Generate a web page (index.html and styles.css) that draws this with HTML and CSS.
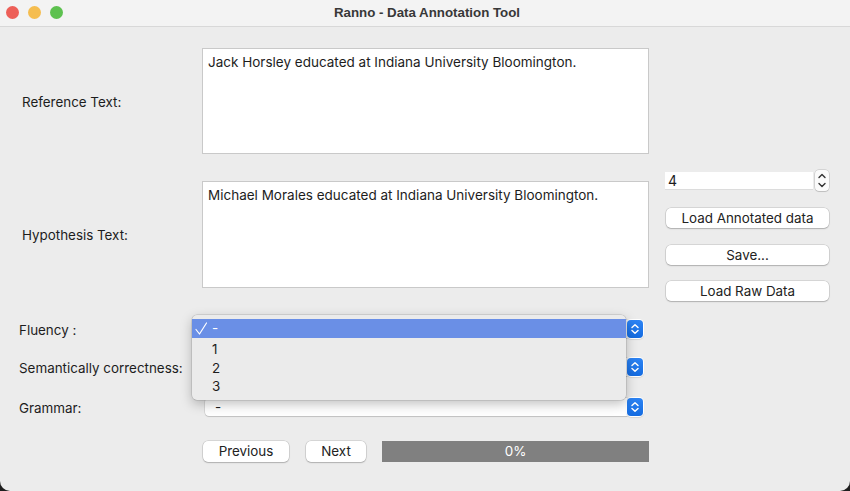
FILE: index.html
```html
<!DOCTYPE html>
<html>
<head>
<meta charset="utf-8">
<title>Ranno - Data Annotation Tool</title>
<link rel="stylesheet" href="styles.css">
</head>
<body>
<div class="window">
  <div class="titlebar">
    <div class="lights">
      <span class="light red"></span>
      <span class="light yellow"></span>
      <span class="light green"></span>
    </div>
    <div class="title">Ranno - Data Annotation Tool</div>
  </div>

  <div class="content">
    <div class="top">
      <div class="label ref-label">Reference Text:</div>
      <div class="textbox">Jack Horsley educated at Indiana University Bloomington.</div>
      <div class="side">
        <div class="spin-row">
          <div class="spin-input">4</div>
          <div class="stepper">
            <svg width="14" height="21" viewBox="0 0 14 21"><path d="M4 7.5 L7 4.5 L10 7.5" fill="none" stroke="#333" stroke-width="1.4" stroke-linecap="round" stroke-linejoin="round"/><path d="M4 13.5 L7 16.5 L10 13.5" fill="none" stroke="#333" stroke-width="1.4" stroke-linecap="round" stroke-linejoin="round"/></svg>
          </div>
        </div>
        <div class="btn side-btn first">Load Annotated data</div>
        <div class="btn side-btn second">Save...</div>
        <div class="btn side-btn third">Load Raw Data</div>
      </div>
      <div class="label hyp-label">Hypothesis Text:</div>
      <div class="textbox">Michael Morales educated at Indiana University Bloomington.</div>
    </div>

    <div class="combos">
      <div class="combo-row r1">
        <div class="clabel">Fluency :</div>
        <div class="combo">
          <div class="combo-field"></div>
          <div class="combo-btn"><svg width="16" height="18" viewBox="0 0 16 18"><path d="M5 7.5 L8 4.8 L11 7.5 M5 10.5 L8 13.2 L11 10.5" fill="none" stroke="#fff" stroke-width="1.5" stroke-linecap="round" stroke-linejoin="round"/></svg></div>
        </div>
      </div>
      <div class="combo-row r2">
        <div class="clabel">Semantically correctness:</div>
        <div class="combo">
          <div class="combo-field"></div>
          <div class="combo-btn"><svg width="16" height="18" viewBox="0 0 16 18"><path d="M5 7.5 L8 4.8 L11 7.5 M5 10.5 L8 13.2 L11 10.5" fill="none" stroke="#fff" stroke-width="1.5" stroke-linecap="round" stroke-linejoin="round"/></svg></div>
        </div>
      </div>
      <div class="combo-row r3">
        <div class="clabel">Grammar:</div>
        <div class="combo">
          <div class="combo-field">-</div>
          <div class="combo-btn"><svg width="16" height="18" viewBox="0 0 16 18"><path d="M5 7.5 L8 4.8 L11 7.5 M5 10.5 L8 13.2 L11 10.5" fill="none" stroke="#fff" stroke-width="1.5" stroke-linecap="round" stroke-linejoin="round"/></svg></div>
        </div>
      </div>
    </div>

    <div class="bottom">
      <div class="btn prev">Previous</div>
      <div class="btn next">Next</div>
      <div class="progress">0%</div>
    </div>
  </div>

  <div class="popup">
    <div class="item selected"><svg class="check" width="14" height="19" viewBox="0 0 14 19"><path d="M2 10.5 L5.5 15 L12.5 4" fill="none" stroke="#fff" stroke-width="1.2" stroke-linecap="round" stroke-linejoin="round"/></svg>-</div>
    <div class="item first-item">1</div>
    <div class="item">2</div>
    <div class="item">3</div>
  </div>
</div>
</body>
</html>
```

FILE: styles.css
```css
* { box-sizing: border-box; }
html, body {
  margin: 0;
  padding: 0;
  background: #1e1e1e;
}
body {
  font-family: Inter, "Liberation Sans", Arial, sans-serif;
  font-size: 13.4px;
  color: #1d1d1d;
}
.window {
  position: relative;
  width: 850px;
  height: 491px;
  background: #ececec;
  border-radius: 0 0 10px 10px;
  overflow: hidden;
}
.titlebar {
  position: relative;
  height: 27px;
  background: #f3f3f3;
  border-bottom: 1px solid #d8d8d8;
  display: flex;
  align-items: center;
  justify-content: center;
}
.lights {
  position: absolute;
  left: 6px;
  top: 6px;
  display: flex;
  gap: 9px;
}
.light {
  width: 13px;
  height: 13px;
  border-radius: 50%;
  display: block;
}
.red { background: #ed5f58; }
.yellow { background: #f5bd4f; }
.green { background: #5dc14f; }
.title {
  font-family: "Liberation Sans", Arial, sans-serif;
  font-weight: bold;
  font-size: 13.3px;
  color: #383838;
  margin-top: -2px;
  margin-left: 4px;
}

.content {
  display: flex;
  flex-direction: column;
}
.top {
  display: grid;
  grid-template-columns: 202px 447px 181px;
  grid-template-rows: 106px 107px;
  row-gap: 27px;
  margin-top: 21px;
}
.label {
  align-self: center;
  padding-left: 22px;
  margin-top: 1px;
}
.ref-label { grid-row: 1; grid-column: 1; }
.hyp-label { grid-row: 2; grid-column: 1; }
.textbox {
  background: #fff;
  border: 1px solid #c9c9c9;
  padding: 5px 5px;
  line-height: 16px;
  font-size: 13.5px;
}
.top .textbox:nth-of-type(2) { grid-row: 1; grid-column: 2; }
.top .textbox:nth-of-type(4) { grid-row: 2; grid-column: 2; }
.side {
  grid-column: 3;
  grid-row: 1 / 3;
  padding-top: 122px;
  padding-left: 16px;
  display: flex;
  flex-direction: column;
}
.spin-row {
  display: flex;
  align-items: center;
  height: 22px;
}
.spin-input {
  flex: none;
  width: 148px;
  height: 18px;
  background: #fff;
  border-bottom: 1px solid #dcdcdc;
  padding-left: 3px;
  font-size: 14px;
  line-height: 18px;
}
.stepper {
  flex: none;
  margin-left: 2px;
  width: 14px;
  height: 21px;
  background: #fbfbfb;
  border-radius: 4px;
  box-shadow: 0 0 0 0.5px rgba(0,0,0,0.2), 0 1px 1px rgba(0,0,0,0.1);
  display: flex;
}
.btn {
  background: #fff;
  border-radius: 5px;
  box-shadow: 0 0 0 0.5px rgba(0,0,0,0.18), 0 1px 1.5px rgba(0,0,0,0.18);
  text-align: center;
  line-height: 20px;
  height: 20px;
  color: #222;
}
.side-btn {
  width: 163px;
  margin-left: 1px;
}
.side-btn.first { margin-top: 17px; }
.side-btn.second { margin-top: 17px; }
.side-btn.third { margin-top: 16px; }

.combos {
  display: flex;
  flex-direction: column;
  margin-top: 32px;
}
.combo-row {
  display: grid;
  grid-template-columns: 205px 438px;
  height: 18px;
  align-items: center;
}
.r2 { margin-top: 20px; }
.r3 { margin-top: 22px; }
.clabel { padding-left: 19px; margin-top: 2px; }
.combo {
  display: flex;
  height: 18px;
}
.combo-field {
  flex: 1;
  background: #fff;
  border-radius: 4px 0 0 4px;
  box-shadow: 0 0 0 0.5px rgba(0,0,0,0.15), 0 1px 1px rgba(0,0,0,0.12);
  padding-left: 10px;
  line-height: 18px;
}
.combo-btn {
  width: 16px;
  height: 18px;
  background: linear-gradient(#2d84f4, #146be0);
  border-radius: 4px;
  box-shadow: 0 0 0 1px #fff, 0 1px 1px 1px rgba(0,0,0,0.1);
  display: flex;
}

.bottom {
  display: flex;
  align-items: center;
  margin-top: 24px;
  padding-left: 203px;
}
.prev { width: 86px; height: 21px; line-height: 21px; margin-top: 1px; }
.next { width: 60px; height: 21px; line-height: 21px; margin-left: 17px; margin-top: 1px; }
.progress {
  margin-left: 16px;
  width: 267px;
  height: 21px;
  background: #808080;
  color: #fff;
  text-align: center;
  line-height: 21px;
}

.popup {
  position: absolute;
  left: 192px;
  top: 315px;
  width: 434px;
  height: 85px;
  background: #ebebeb;
  border-radius: 5px;
  box-shadow: 0 0 0 0.5px rgba(0,0,0,0.18), 0 4px 12px rgba(0,0,0,0.25);
  padding-top: 4px;
}
.item {
  height: 18.5px;
  line-height: 18.5px;
  padding-left: 20px;
  color: #1d1d1d;
  position: relative;
}
.item.first-item { margin-top: 2px; }
.item.selected {
  background: #6a8fe6;
  color: #fff;
  height: 19px;
  line-height: 19px;
}
.check {
  position: absolute;
  left: 2px;
  top: 0;
}
```
